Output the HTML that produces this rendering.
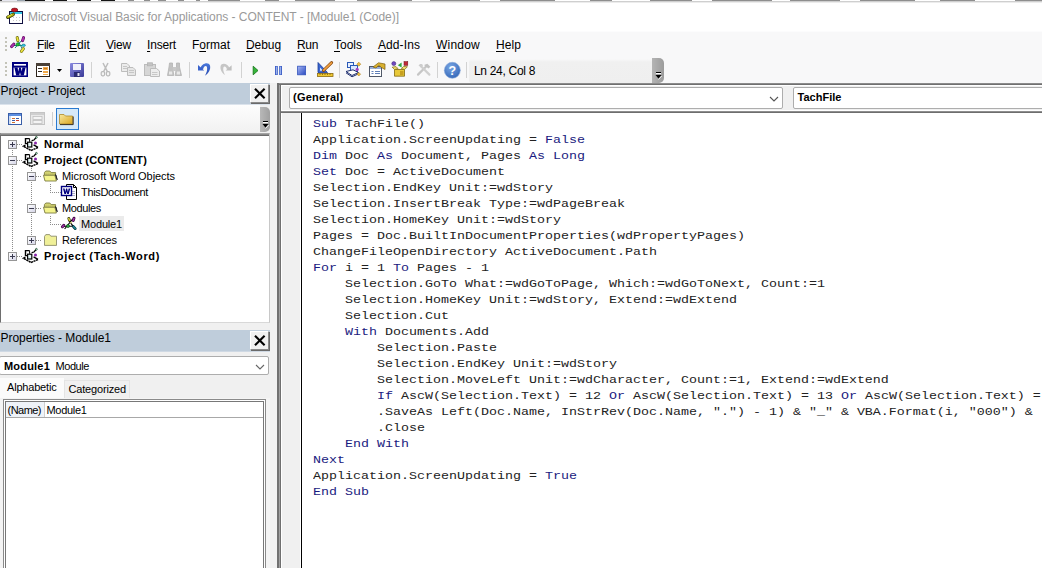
<!DOCTYPE html>
<html><head><meta charset="utf-8"><title>Microsoft Visual Basic for Applications - CONTENT - [Module1 (Code)]</title>
<style>
html,body{margin:0;padding:0;}
body{width:1042px;height:568px;overflow:hidden;position:relative;background:#f0f0f0;font-family:"Liberation Sans",sans-serif;font-size:12px;color:#000;}
.a{position:absolute;}
.t{position:absolute;white-space:nowrap;color:#000;}
u{text-decoration:underline;text-underline-offset:2px;text-decoration-thickness:1px;}
svg{position:absolute;overflow:visible;}
.sep{position:absolute;width:1px;background:#d2d2d2;}
.dot{position:absolute;width:2px;height:2px;background:#c3c3b8;}
#code{position:absolute;left:313px;top:116.9px;margin:0;font-family:"Liberation Mono",monospace;font-size:13.333px;line-height:20px;color:#222;white-space:pre;transform:scaleY(0.8);transform-origin:0 0;}
#code b{font-weight:normal;color:#1a1a80;}
.xb{position:absolute;width:19px;height:19px;box-sizing:border-box;background:#f0f0f0;border:1px solid;border-color:#fff #8a8a8a #8a8a8a #fff;box-shadow:1px 1px 0 #6a6a6a;}
.box{position:absolute;width:9px;height:9px;box-sizing:border-box;border:1px solid #969696;background:linear-gradient(135deg,#fff,#d6d6e8);}
.box i{position:absolute;left:1px;top:3px;width:5px;height:1px;background:#3a3a50;}
.box.p em{position:absolute;left:3px;top:1px;width:1px;height:5px;background:#3a3a50;}
.hd{position:absolute;height:1px;background-image:linear-gradient(90deg,#8c8c8c 50%,transparent 50%);background-size:2px 1px;}
.vd{position:absolute;width:1px;background-image:linear-gradient(180deg,#8c8c8c 50%,transparent 50%);background-size:1px 2px;}
</style></head><body>
<!-- top strip & title bar -->
<div class="a" style="left:0;top:0;width:1042px;height:31px;background:#fff;"></div>
<!-- fragments of the window behind, clipped at the top edge -->
<div class="a" style="left:0;top:0;width:1042px;height:1px;background:linear-gradient(90deg,#444 0 2px,#e8e8f0 2px 17px,#9aa4ae 17px 25px,#151515 25px 45px,#fff 45px 53px,#151515 53px 67px,#fff 67px 77px,#151515 77px 91px,#fff 91px 101px,#151515 101px 115px,#fff 115px 128px,#8e8e8e 128px 134px,#fff 134px 144px,#8e8e8e 144px 150px,#fff 150px 158px,#8e8e8e 158px 166px,#fff 166px 178px,#8e8e8e 178px 184px,#fff 184px 196px,#8e8e8e 196px 200px,#fff 200px 208px,#8e8e8e 208px 240px,#fff 240px 265px,#8e8e8e 265px 279px,#fff 279px 295px,#8e8e8e 295px 335px,#fff 335px 357px,#8e8e8e 357px 412px,#fff 412px 430px,#8e8e8e 430px 480px,#fff 480px 500px,#8e8e8e 500px 555px,#fff 555px 590px,#8e8e8e 590px 612px,#fff 612px 650px,#8e8e8e 650px 692px,#fff 692px 712px,#8e8e8e 712px 772px,#fff 772px 790px,#8e8e8e 790px 840px,#fff 840px 860px,#8e8e8e 860px 915px,#fff 915px 940px,#8e8e8e 940px 975px,#fff 975px 1015px,#8e8e8e 1015px 1042px);"></div>
<div class="a" style="left:0;top:1px;width:1042px;height:1px;background:#cfcfcf;"></div>
<div class="a" style="left:0;top:2px;width:1042px;height:1px;background:#ececec;"></div>

<!-- menu + toolbar background -->
<div class="a" style="left:0;top:31px;width:1042px;height:1px;background:#fcfcfd;"></div>
<div class="a" style="left:0;top:32px;width:1042px;height:51px;background:#f8f8f9;"></div>
<!-- title icon -->
<svg style="left:7px;top:8px;" width="17" height="16" viewBox="0 0 17 16">
<rect x="2.5" y="3.5" width="13" height="12" fill="#fff" stroke="#101040" stroke-width="1"/>
<rect x="3" y="4" width="12" height="2" fill="#38c8e8"/>
<rect x="6" y="9" width="1" height="1" fill="#c8c8c8"/><rect x="9" y="9" width="1" height="1" fill="#c8c8c8"/><rect x="12" y="9" width="1" height="1" fill="#c8c8c8"/><rect x="6" y="12" width="1" height="1" fill="#c8c8c8"/><rect x="9" y="12" width="1" height="1" fill="#c8c8c8"/><rect x="12" y="12" width="1" height="1" fill="#c8c8c8"/>
<ellipse cx="7.6" cy="2" rx="3.2" ry="1.9" fill="#c41424" stroke="#601018" stroke-width="0.6"/>
<path d="M0.8 9.2 L6.2 6.4" stroke="#303000" stroke-width="3.4" stroke-linecap="round"/>
<path d="M0.9 9.1 L6.1 6.4" stroke="#a8a810" stroke-width="2.2" stroke-linecap="round"/>
<path d="M1.2 8.4 L4.6 6.6" stroke="#f0f060" stroke-width="0.9" stroke-linecap="round"/>
</svg>
<!-- menu grip -->
<div class="dot" style="left:5px;top:37px;"></div><div class="dot" style="left:5px;top:41px;"></div><div class="dot" style="left:5px;top:45px;"></div><div class="dot" style="left:5px;top:49px;"></div>
<!-- menu icon (module) -->
<svg style="left:10px;top:36px;" width="17" height="17" viewBox="0 0 17 17">
<path d="M3 9.5 L13.5 9.5 M5 12 L12.5 3.5 M7.5 4 L13 14" stroke="#108080" stroke-width="1" fill="none"/>
<path d="M7.2 1.6 L7.9 4.6" stroke="#606000" stroke-width="3" stroke-linecap="round"/>
<path d="M7.2 1.6 L7.9 4.6" stroke="#e8e040" stroke-width="1.9" stroke-linecap="round"/>
<path d="M13.6 1.6 L12.6 4.6" stroke="#500050" stroke-width="3" stroke-linecap="round"/>
<path d="M13.6 1.6 L12.6 4.6" stroke="#b030b0" stroke-width="1.9" stroke-linecap="round"/>
<path d="M1.6 10.6 L3.8 8.2" stroke="#500050" stroke-width="3" stroke-linecap="round"/>
<path d="M1.6 10.6 L3.8 8.2" stroke="#b030b0" stroke-width="1.9" stroke-linecap="round"/>
<path d="M11.4 15.4 L13.4 12.6" stroke="#606000" stroke-width="3" stroke-linecap="round"/>
<path d="M11.4 15.4 L13.4 12.6" stroke="#e8e040" stroke-width="1.9" stroke-linecap="round"/>
<circle cx="7.7" cy="8.4" r="1.7" fill="#20c030" stroke="#106018" stroke-width="0.5"/>
<ellipse cx="13.6" cy="9.3" rx="1.8" ry="1.2" fill="#30c8e0" stroke="#106070" stroke-width="0.5"/>
</svg>

<!-- status box -->
<div class="a" style="left:469px;top:59px;width:184px;height:24px;background:linear-gradient(180deg,#f8f8f9 0,#f0f0f0 3px,#efefef 100%);border-radius:3px 0 0 3px;"></div>
<div class="a" style="left:652px;top:58px;width:12px;height:25px;background:linear-gradient(90deg,#b4b4b4,#9c9c9c);border-radius:0 5px 5px 0;"></div>
<!-- toolbar grip -->
<div class="dot" style="left:5px;top:62px;"></div><div class="dot" style="left:5px;top:66px;"></div><div class="dot" style="left:5px;top:70px;"></div><div class="dot" style="left:5px;top:74px;"></div>
<!-- word -->
<svg style="left:12px;top:62px;" width="16" height="15" viewBox="0 0 16 15">
<rect x="0" y="0" width="16" height="15" fill="#000080"/>
<rect x="2" y="2" width="12" height="1.6" fill="#fff"/>
<rect x="1.6" y="5.6" width="12.8" height="7.8" fill="#fff"/>
<path d="M2.4 5.6 H5.6 L6.2 9.6 L7.2 5.6 H8.8 L9.8 9.6 L10.4 5.6 H13.6 L11.8 13.4 H8.8 L8 10.2 L7.2 13.4 H4.2 Z" fill="#000080"/>
</svg>
<!-- userform -->
<svg style="left:36px;top:63px;" width="14" height="14" viewBox="0 0 14 14" shape-rendering="crispEdges">
<rect x="0" y="0" width="14" height="14" fill="#2a2018"/>
<rect x="1" y="3" width="12" height="10" fill="#fff"/>
<rect x="0" y="0" width="14" height="3" fill="#4a4038"/>
<rect x="2" y="5" width="4" height="1" fill="#3a3028"/><rect x="2" y="8" width="4" height="1" fill="#3a3028"/>
<rect x="7" y="4" width="5" height="3" fill="#f0a848"/><rect x="8" y="5" width="3" height="1" fill="#c87820"/>
<rect x="7" y="8" width="5" height="2" fill="#f0a848"/><rect x="7" y="11" width="5" height="1" fill="#f0a848"/>
</svg>
<svg style="left:57px;top:69px;" width="5" height="3" viewBox="0 0 5 3"><path d="M0 0 H5 L2.5 3 Z" fill="#000"/></svg>
<!-- save -->
<svg style="left:70px;top:63px;" width="14" height="14" viewBox="0 0 14 14">
<defs><linearGradient id="sv" x1="0" y1="0" x2="1" y2="1"><stop offset="0" stop-color="#8a8ae0"/><stop offset="1" stop-color="#3a3a98"/></linearGradient></defs>
<rect x="0" y="0" width="14" height="14" rx="1" fill="url(#sv)"/>
<rect x="3" y="1" width="8" height="6" fill="#f0f0fa"/>
<rect x="4" y="9" width="6" height="5" fill="#2a2a70"/>
<rect x="7.5" y="10" width="2" height="3" fill="#e0e0f0"/>
</svg>
<div class="sep" style="left:91px;top:62px;height:16px;"></div>
<!-- cut (disabled) -->
<svg style="left:100px;top:62px;" width="11" height="15" viewBox="100 62 11 15">
<path d="M103 63 L107.4 71.6 M108 63 L103.6 71.6" stroke="#bdbdbd" stroke-width="1.5" fill="none"/>
<rect x="101.2" y="71.6" width="3.4" height="4.2" rx="1.2" fill="#f4f4f4" stroke="#b9b9b9" stroke-width="1.2"/><rect x="106.4" y="71.6" width="3.4" height="4.2" rx="1.2" fill="#f4f4f4" stroke="#b9b9b9" stroke-width="1.2"/>
</svg>
<!-- copy (disabled) -->
<svg style="left:121px;top:63px;" width="15" height="13" viewBox="0 0 15 13">
<path d="M0.5 0.5 H6 L8.5 3 V8.5 H0.5 Z" fill="#ececec" stroke="#bdbdbd"/>
<path d="M6.5 4.5 H12 L14.5 7 V12.5 H6.5 Z" fill="#e6e6e6" stroke="#bdbdbd"/>
<path d="M8 7.5 H13 M8 9.5 H13 M2 3.5 H6 M2 5.5 H6" stroke="#c6c6c6" stroke-width="1"/>
</svg>
<!-- paste (disabled) -->
<svg style="left:144px;top:62px;" width="16" height="15" viewBox="0 0 16 15">
<rect x="0.5" y="2.5" width="11" height="11" fill="#d6d6d6" stroke="#bcbcbc"/>
<rect x="3.5" y="0.8" width="5" height="3" fill="#c4c4c4" stroke="#b4b4b4" stroke-width="0.8"/>
<path d="M6.5 6.5 H12.5 L15.5 9 V14.5 H6.5 Z" fill="#ededed" stroke="#bcbcbc"/>
<path d="M8 10.5 H13.5 M8 12.5 H13.5" stroke="#c8c8c8"/>
</svg>
<!-- find (disabled) -->
<svg style="left:167px;top:62px;" width="15" height="14" viewBox="0 0 15 14">
<path d="M2.5 1 H5.5 V5 L6.8 13.5 H0.5 L2 5 Z" fill="#c2c2c2" stroke="#b4b4b4" stroke-width="0.8"/>
<path d="M9.5 1 H12.5 V5 L14.5 13.5 H8.2 L9.5 5 Z" fill="#c2c2c2" stroke="#b4b4b4" stroke-width="0.8"/>
<rect x="5.5" y="5" width="4" height="4" fill="#c8c8c8"/>
<rect x="2" y="9.5" width="3.2" height="3" fill="#e8e8e8"/><rect x="9.8" y="9.5" width="3.2" height="3" fill="#e8e8e8"/>
</svg>
<div class="sep" style="left:189px;top:62px;height:16px;"></div>
<!-- undo -->
<svg style="left:190px;top:58px;" width="52" height="24" viewBox="190 58 52 24">
<defs><linearGradient id="ud" x1="0" y1="0" x2="0" y2="1"><stop offset="0" stop-color="#4a78dc"/><stop offset="1" stop-color="#2648b0"/></linearGradient></defs>
<path d="M200.2 68.6 C201.4 63.4 208.6 61.2 210 65.6 C211 69.6 208.4 73.4 205 75.8 C206.6 72.6 207.6 69.4 207 67.2 C206.4 65 203.8 65.8 203 69.4 Z" fill="url(#ud)"/>
<path d="M198 65 L198 70.5 L204.2 70.5 Z" fill="#3a62cc"/>
<!-- redo (disabled) -->
<path d="M229.6 68.6 C228.4 63.6 221.6 62 220.6 66 C219.8 69.6 222 72.8 225 75 C223.6 72.4 222.8 69.6 223.4 67.6 C224 65.6 226.2 66.2 227 69.4 Z" fill="#c6c6c6"/>
<path d="M231.6 65.2 L231.6 70.5 L225.6 70.5 Z" fill="#c0c0c0"/>
</svg>
<div class="sep" style="left:241px;top:62px;height:16px;"></div>
<!-- run -->
<svg style="left:252px;top:65px;" width="8" height="11" viewBox="252 65 8 11"><path d="M253.2 66.2 L258 70.5 L253.2 74.8 Z" fill="#34b43a" stroke="#187a1c" stroke-width="0.9" stroke-linejoin="round"/></svg>
<!-- pause -->
<svg style="left:274px;top:65px;" width="9" height="11" viewBox="274 65 9 11"><rect x="275" y="66" width="2.8" height="9" fill="#3a5cc4"/><rect x="279.2" y="66" width="2.8" height="9" fill="#3a5cc4"/><rect x="275.9" y="66.6" width="1" height="7.8" fill="#a4baf2"/><rect x="280.1" y="66.6" width="1" height="7.8" fill="#a4baf2"/></svg>
<!-- stop -->
<svg style="left:297px;top:65px;" width="10" height="11" viewBox="297 65 10 11"><defs><linearGradient id="st" x1="0" y1="0" x2="1" y2="1"><stop offset="0" stop-color="#a8b8f4"/><stop offset="1" stop-color="#2848c0"/></linearGradient></defs><rect x="297.6" y="66.2" width="8" height="8.6" fill="url(#st)" stroke="#3454bc" stroke-width="0.8"/></svg>
<!-- design mode -->
<svg style="left:317px;top:61px;" width="17" height="16" viewBox="0 0 17 16">
<path d="M1 1.5 V11.5 H10.5 Z" fill="#3a66d0" stroke="#1c3c98" stroke-width="0.8"/>
<path d="M3 6.5 V9.8 H6.2 Z" fill="#dfe8fa"/>
<path d="M6.5 9.5 L14.6 1.6" stroke="#8a4a10" stroke-width="3" stroke-linecap="round"/>
<path d="M6.8 9.2 L14.4 1.8" stroke="#f0a040" stroke-width="1.7" stroke-linecap="round"/>
<rect x="0.5" y="12.5" width="15.5" height="3" fill="#f0c830" stroke="#8a6a10" stroke-width="0.8"/>
<path d="M3 12.5 V14 M5.5 12.5 V14 M8 12.5 V14 M10.5 12.5 V14 M13 12.5 V14" stroke="#6a5008" stroke-width="0.7"/>
</svg>
<div class="sep" style="left:339px;top:62px;height:16px;"></div>
<!-- project explorer -->
<svg style="left:345px;top:61px;" width="17" height="17" viewBox="0 0 17 17">
<rect x="2.5" y="1.5" width="6" height="5" fill="#e8f0ff" stroke="#2a5ab8"/>
<rect x="5.5" y="4.5" width="7" height="6" fill="#dce8ff" stroke="#2a5ab8"/>
<path d="M1 10.5 L7 14.5 L13.5 11.5 L8 8.8 Z" fill="#fff" stroke="#203070" stroke-width="1"/>
<path d="M1 11.8 L7 15.8 L13.5 12.8" fill="none" stroke="#203070" stroke-width="1"/>
<path d="M13.8 1.2 L15.8 3.2 L13.8 5.2 L11.8 3.2 Z" fill="#f0c040" stroke="#a07010" stroke-width="0.5"/>
<circle cx="12.2" cy="8.4" r="1.6" fill="#a040c0"/>
<path d="M13.8 11.4 L15.6 13.2 L13.8 15 L12 13.2 Z" fill="#f0c040" stroke="#a07010" stroke-width="0.5"/>
</svg>
<!-- properties window -->
<svg style="left:369px;top:62px;" width="17" height="15" viewBox="0 0 17 15">
<rect x="0.5" y="4.5" width="12" height="10" fill="#fff" stroke="#505868"/>
<rect x="1" y="5" width="11" height="2" fill="#9ab0d8"/>
<path d="M2.5 9.5 H4.5 M6 9.5 H11 M2.5 11.5 H4.5 M6 11.5 H11" stroke="#6080b8" stroke-width="1"/>
<path d="M4 5 L9.5 0.8 L16 2 V7.5 L12.5 5.5 L9.8 3.4 L7 6 Z" fill="#d8b030" stroke="#806010" stroke-width="0.7"/>
</svg>
<!-- object browser -->
<svg style="left:391px;top:61px;" width="18" height="16" viewBox="0 0 18 16">
<path d="M3.5 8.5 H13.5 V15.2 H3.5 Z" fill="#e8c838" stroke="#806810" stroke-width="0.8"/>
<path d="M3.5 8.5 L1.2 6.2 L5 5.6 L7 7.6 Z M13.5 8.5 L16.4 5.8 L12.6 5.4 L10.4 7.6 Z" fill="#f4e070" stroke="#806810" stroke-width="0.7"/>
<rect x="9" y="10" width="3.5" height="4" fill="#c8a020"/>
<circle cx="2.8" cy="2.6" r="2" fill="#7048c0" stroke="#382070" stroke-width="0.5"/>
<path d="M6.8 4.2 L10.6 1.6 V6.4 Z" fill="#30a840"/>
<rect x="13" y="0.6" width="3.8" height="3.8" fill="#c02838" stroke="#701018" stroke-width="0.5"/>
</svg>
<!-- toolbox (disabled) -->
<svg style="left:416px;top:63px;" width="16" height="13" viewBox="0 0 16 13">
<path d="M2 11.6 L10.6 3" stroke="#c6c6c6" stroke-width="2.2" stroke-linecap="round"/>
<path d="M13.4 11.6 L5 3.2" stroke="#cfcfcf" stroke-width="2.2" stroke-linecap="round"/>
<path d="M8 2 L11.4 0.8 L14.4 3.8 L12.4 5.6 Z" fill="#c2c2c2"/>
<path d="M2.6 2.6 C3.6 0.6 6.2 0.6 7 2.4 L5 4.4 Z" fill="#cdcdcd"/>
</svg>
<div class="sep" style="left:437px;top:62px;height:16px;"></div>
<!-- help -->
<svg style="left:444px;top:62px;" width="17" height="17" viewBox="0 0 17 17">
<defs><radialGradient id="hp" cx="0.4" cy="0.3" r="0.8"><stop offset="0" stop-color="#7aa6e4"/><stop offset="1" stop-color="#2e62b4"/></radialGradient></defs>
<circle cx="8.3" cy="8.3" r="8" fill="url(#hp)" stroke="#88a8d8" stroke-width="0.6"/>
<text x="8.4" y="12.6" text-anchor="middle" font-family="Liberation Sans, sans-serif" font-size="12.5" font-weight="bold" fill="#fff">?</text>
</svg>
<div class="sep" style="left:466px;top:62px;height:16px;"></div>
<svg style="left:655px;top:72px;" width="7" height="8" viewBox="0 0 7 8"><rect x="1" y="0" width="5" height="1" fill="#000"/><rect x="1" y="1" width="5" height="1" fill="#fff"/><path d="M0.5 3 H6.5 L3.5 6.5 Z" fill="#000"/><path d="M3.5 7.5 L6.8 4" stroke="#fff" stroke-width="0.8"/></svg>

<!-- Project panel -->
<div class="a" style="left:0;top:83px;width:270px;height:21px;background:#bfcddb;"></div>
<div class="a" style="left:0;top:104px;width:270px;height:1px;background:#dbe3ec;"></div>
<div class="xb" style="left:250px;top:84px;"></div>
<svg style="left:254px;top:88px;" width="12" height="11" viewBox="0 0 12 11"><path d="M1 0.8 L10.6 10.2 M10.6 0.8 L1 10.2" stroke="#000" stroke-width="2.1" fill="none"/></svg>
<div class="a" style="left:0;top:105px;width:260px;height:28px;background:linear-gradient(180deg,#fdfdfd,#f1f1f1);"></div>
<div class="a" style="left:260px;top:107px;width:10px;height:25px;background:linear-gradient(90deg,#b8b8b8,#a0a0a0);border-radius:0 5px 5px 0;"></div>
<svg style="left:262px;top:121px;" width="7" height="8" viewBox="0 0 7 8"><rect x="1" y="0" width="5" height="1" fill="#000"/><rect x="1" y="1" width="5" height="1" fill="#fff"/><path d="M0.5 3 H6.5 L3.5 6.5 Z" fill="#000"/><path d="M3.5 7.5 L6.8 4" stroke="#fff" stroke-width="0.8"/></svg>
<!-- project toolbar icons -->
<svg style="left:8px;top:113px;" width="14" height="12" viewBox="0 0 14 12"><rect x="0.5" y="0.5" width="13" height="11" fill="#fff" stroke="#3a5ea8"/><rect x="1" y="1" width="12" height="2" fill="#5d8fe0"/><rect x="1" y="3" width="2" height="8" fill="#cfdcf2"/><rect x="4" y="5" width="3" height="1" fill="#d07030"/><rect x="8" y="5" width="3" height="1" fill="#3a5ea8"/><rect x="4" y="7" width="3" height="1" fill="#3a5ea8"/><rect x="8" y="7" width="3" height="1" fill="#d04030"/><rect x="4" y="9" width="3" height="1" fill="#d07030"/></svg>
<svg style="left:30px;top:112px;" width="15" height="13" viewBox="0 0 15 13"><rect x="0.5" y="0.5" width="14" height="12" fill="#e9e9e9" stroke="#c4c4c4"/><rect x="1" y="1" width="13" height="2" fill="#cfcfcf"/><rect x="3" y="4.5" width="9" height="3" fill="#f4f4f4" stroke="#c0c0c0" stroke-width="0.8"/><rect x="3" y="8.5" width="9" height="3" fill="#f4f4f4" stroke="#c0c0c0" stroke-width="0.8"/></svg>
<div class="sep" style="left:52px;top:112px;height:14px;background:#cfcfcf;"></div>
<div class="a" style="left:56px;top:108px;width:23px;height:22px;box-sizing:border-box;border:1px solid #2a7ad0;background:#d6e9f8;"></div>
<svg style="left:59px;top:113px;" width="16" height="12" viewBox="0 0 16 12"><defs><linearGradient id="fg" x1="0" y1="0" x2="1" y2="1"><stop offset="0" stop-color="#f8e9a0"/><stop offset="1" stop-color="#d9a520"/></linearGradient></defs><path d="M0.5 1.5 H5 L6.5 3 H13.5 V11 H0.5 Z" fill="url(#fg)" stroke="#b08a28" stroke-width="0.8"/><path d="M14.2 3.5 V11.6 H1" stroke="#3a3020" stroke-width="1" fill="none"/></svg>
<!-- tree -->
<div class="a" style="left:0;top:133px;width:270px;height:190px;background:#fff;border:1px solid;border-color:#a4a4a4 #c8c8c8 #d8d8d8 #6e6e6e;box-sizing:border-box;"></div>
<div class="a" style="left:0;top:134px;width:269px;height:1px;background:#8a8a8a;"></div>
<div class="a" style="left:0;top:135px;width:269px;height:1px;background:#6c6c6c;"></div>
<div class="a" style="left:79px;top:216px;width:45px;height:15px;background:#ebebeb;"></div>
<!-- tree lines -->
<div class="vd" style="left:12px;top:150px;height:102px;"></div>
<div class="hd" style="left:17px;top:144px;width:6px;"></div>
<div class="hd" style="left:17px;top:160px;width:6px;"></div>
<div class="hd" style="left:17px;top:256px;width:6px;"></div>
<div class="vd" style="left:31px;top:168px;height:68px;"></div>
<div class="hd" style="left:36px;top:176px;width:6px;"></div>
<div class="hd" style="left:36px;top:208px;width:6px;"></div>
<div class="hd" style="left:36px;top:240px;width:6px;"></div>
<div class="vd" style="left:50px;top:184px;height:8px;"></div>
<div class="hd" style="left:50px;top:192px;width:11px;"></div>
<div class="vd" style="left:50px;top:216px;height:8px;"></div>
<div class="hd" style="left:50px;top:224px;width:11px;"></div>
<div class="box p" style="left:8px;top:140px;"><i></i><em></em></div>
<div class="box" style="left:8px;top:156px;"><i></i></div>
<div class="box p" style="left:8px;top:252px;"><i></i><em></em></div>
<div class="box" style="left:27px;top:172px;"><i></i></div>
<div class="box" style="left:27px;top:204px;"><i></i></div>
<div class="box p" style="left:27px;top:236px;"><i></i><em></em></div>
<svg style="left:23px;top:136px;" width="16" height="16"><path d="M6.6 2.6 H2.5 V7.6 H4.4" fill="none" stroke="#000" stroke-width="1.4"/>
<path d="M6.6 2.6 V5.8" fill="none" stroke="#000" stroke-width="1"/>
<rect x="4.6" y="6.2" width="4.2" height="4.8" fill="#e4f6f6" stroke="#000" stroke-width="1.2"/>
<path d="M2.4 9.2 L0.5 10.2 L8 14.5 L15 11.5" fill="none" stroke="#000" stroke-width="1.5" stroke-dasharray="2.2 0.5"/>
<path d="M10.6 8.8 L15 11.4" stroke="#000" stroke-width="1.4"/>
<path d="M8.6 4.6 L11 4 L13.6 1" stroke="#000" stroke-width="1.2" fill="none"/>
<circle cx="13.4" cy="1.3" r="0.9" fill="#dfe" stroke="#142" stroke-width="0.7"/>
<circle cx="12.5" cy="7" r="1.5" fill="#8828a8"/></svg>
<svg style="left:23px;top:152px;" width="16" height="16"><path d="M6.6 2.6 H2.5 V7.6 H4.4" fill="none" stroke="#000" stroke-width="1.4"/>
<path d="M6.6 2.6 V5.8" fill="none" stroke="#000" stroke-width="1"/>
<rect x="4.6" y="6.2" width="4.2" height="4.8" fill="#e4f6f6" stroke="#000" stroke-width="1.2"/>
<path d="M2.4 9.2 L0.5 10.2 L8 14.5 L15 11.5" fill="none" stroke="#000" stroke-width="1.5" stroke-dasharray="2.2 0.5"/>
<path d="M10.6 8.8 L15 11.4" stroke="#000" stroke-width="1.4"/>
<path d="M8.6 4.6 L11 4 L13.6 1" stroke="#000" stroke-width="1.2" fill="none"/>
<circle cx="13.4" cy="1.3" r="0.9" fill="#dfe" stroke="#142" stroke-width="0.7"/>
<circle cx="12.5" cy="7" r="1.5" fill="#8828a8"/></svg>
<svg style="left:23px;top:248px;" width="16" height="16"><path d="M6.6 2.6 H2.5 V7.6 H4.4" fill="none" stroke="#000" stroke-width="1.4"/>
<path d="M6.6 2.6 V5.8" fill="none" stroke="#000" stroke-width="1"/>
<rect x="4.6" y="6.2" width="4.2" height="4.8" fill="#e4f6f6" stroke="#000" stroke-width="1.2"/>
<path d="M2.4 9.2 L0.5 10.2 L8 14.5 L15 11.5" fill="none" stroke="#000" stroke-width="1.5" stroke-dasharray="2.2 0.5"/>
<path d="M10.6 8.8 L15 11.4" stroke="#000" stroke-width="1.4"/>
<path d="M8.6 4.6 L11 4 L13.6 1" stroke="#000" stroke-width="1.2" fill="none"/>
<circle cx="13.4" cy="1.3" r="0.9" fill="#dfe" stroke="#142" stroke-width="0.7"/>
<circle cx="12.5" cy="7" r="1.5" fill="#8828a8"/></svg>
<svg style="left:43px;top:170px;" width="16" height="13"><path d="M1.4 5.6 L1.4 2.6 L2.8 1 H6.8 L8.2 2.6 H12.6 V5.6 Z" fill="#d8d878" stroke="#7a7a40" stroke-width="0.9"/>
<path d="M2.6 3.2 H11.6 M2.6 4.6 H11.6" stroke="#a8a848" stroke-width="0.7" stroke-dasharray="1 1"/>
<path d="M0.5 5.2 H11.8 L13.4 11 H2 Z" fill="#f4f48c" stroke="#7a7a40" stroke-width="0.9"/>
<path d="M12.4 4.6 L14.2 9.8 L13 5.2 Z" fill="#202020" stroke="#202020" stroke-width="0.9"/></svg>
<svg style="left:43px;top:202px;" width="16" height="13"><path d="M1.4 5.6 L1.4 2.6 L2.8 1 H6.8 L8.2 2.6 H12.6 V5.6 Z" fill="#d8d878" stroke="#7a7a40" stroke-width="0.9"/>
<path d="M2.6 3.2 H11.6 M2.6 4.6 H11.6" stroke="#a8a848" stroke-width="0.7" stroke-dasharray="1 1"/>
<path d="M0.5 5.2 H11.8 L13.4 11 H2 Z" fill="#f4f48c" stroke="#7a7a40" stroke-width="0.9"/>
<path d="M12.4 4.6 L14.2 9.8 L13 5.2 Z" fill="#202020" stroke="#202020" stroke-width="0.9"/></svg>
<svg style="left:44px;top:234px;" width="16" height="13"><path d="M0.5 2.4 L1.8 0.6 H5.6 L6.8 2.2 H12.5 V11.4 H0.5 Z" fill="#f0f098" stroke="#808060" stroke-width="0.8"/></svg>
<!-- ThisDocument icon -->
<svg style="left:61px;top:184px;" width="17" height="16" viewBox="0 0 17 16">
<path d="M5.5 0.5 H12.5 L15.5 3.5 V15.5 H5.5 Z" fill="#fff" stroke="#000" stroke-width="1"/>
<path d="M12.5 0.5 V3.5 H15.5" fill="none" stroke="#000" stroke-width="1"/>
<path d="M11 7.5 H14 M11 9.5 H14 M11 11.5 H14" stroke="#b0b0c8" stroke-width="1"/>
<rect x="0.5" y="2.5" width="10" height="9" fill="#fff" stroke="#000080" stroke-width="1.4"/>
<path d="M2 4.4 H3.6 L4.3 8 L5 4.4 H6.2 L6.9 8 L7.6 4.4 H9.2 L7.8 10 H6.2 L5.6 7.4 L5 10 H3.4 Z" fill="#000080"/>
</svg>
<!-- Module1 icon -->
<svg style="left:61px;top:216px;" width="17" height="16" viewBox="61 216 17 16">
<path d="M63 226.2 L73.5 226.2 M64.6 229 L72.6 219.2 M68.6 219.6 L74.6 228.6" stroke="#000" stroke-width="1.1" fill="none"/>
<path d="M68.8 218.4 L69.4 220.2" stroke="#303000" stroke-width="2.8" stroke-linecap="round"/><path d="M68.8 218.4 L69.4 220.2" stroke="#dcd440" stroke-width="1.5" stroke-linecap="round"/>
<path d="M74 218.2 L73.2 220.4" stroke="#300030" stroke-width="2.9" stroke-linecap="round"/><path d="M74 218.2 L73.2 220.4" stroke="#a030a8" stroke-width="1.6" stroke-linecap="round"/>
<path d="M62.4 226.8 L63.8 225.4" stroke="#300030" stroke-width="2.9" stroke-linecap="round"/><path d="M62.4 226.8 L63.8 225.4" stroke="#a030a8" stroke-width="1.6" stroke-linecap="round"/>
<circle cx="68" cy="226" r="1.6" fill="#28a840" stroke="#0c4018" stroke-width="0.6"/>
<path d="M73.4 226.6 L75.2 228.6" stroke="#003038" stroke-width="2.8" stroke-linecap="round"/><path d="M73.4 226.6 L75.2 228.6" stroke="#208898" stroke-width="1.5" stroke-linecap="round"/>
<circle cx="71" cy="222.6" r="0.9" fill="#e8e080"/>
</svg>

<!-- Properties panel -->
<div class="a" style="left:0;top:330px;width:270px;height:21px;background:#bfcddb;"></div>
<div class="a" style="left:0;top:351px;width:270px;height:1px;background:#cfd9e4;"></div>
<div class="xb" style="left:250px;top:331px;"></div>
<svg style="left:254px;top:335px;" width="12" height="11" viewBox="0 0 12 11"><path d="M1 0.8 L10.6 10.2 M10.6 0.8 L1 10.2" stroke="#000" stroke-width="2.1" fill="none"/></svg>
<div class="a" style="left:-1px;top:356px;width:270px;height:19px;background:#fff;border:1px solid #adadad;box-sizing:border-box;border-radius:2px;"></div>
<svg style="left:255px;top:363.5px;" width="10" height="7" viewBox="0 0 10 7"><path d="M1 1 L5 5 L9 1" fill="none" stroke="#666" stroke-width="1.1"/></svg>
<!-- tabs -->
<div class="a" style="left:0;top:378px;width:64px;height:22px;background:#fbfbfb;"></div>
<div class="a" style="left:64px;top:380px;width:66px;height:18px;background:#f0f0f0;border:1px solid #e4e4e4;border-bottom:none;box-sizing:border-box;"></div>
<div class="a" style="left:0;top:398px;width:270px;height:170px;background:#f4f4f4;"></div>
<!-- grid -->
<div class="a" style="left:3px;top:399px;width:263px;height:180px;background:#fff;border:1px solid #8a8a8a;box-sizing:border-box;"></div>
<div class="a" style="left:5px;top:401px;width:259px;height:180px;background:#fff;border:1px solid #787878;box-sizing:border-box;"></div>
<div class="a" style="left:6px;top:402px;width:38px;height:15px;background:#eef2f8;"></div>
<div class="a" style="left:44px;top:402px;width:1px;height:15px;background:#d0d0d0;"></div>
<div class="a" style="left:6px;top:417px;width:257px;height:1px;background:#a8a8a8;"></div>

<!-- splitter + MDI frame -->
<div class="a" style="left:270px;top:83px;width:772px;height:485px;background:#f0f0f0;"></div>
<div class="a" style="left:277px;top:83px;width:765px;height:1px;background:#8c8c8c;"></div>
<div class="a" style="left:277px;top:84px;width:765px;height:1px;background:#707070;"></div>
<div class="a" style="left:281px;top:85px;width:761px;height:1px;background:#fff;"></div>
<div class="a" style="left:277px;top:83px;width:2px;height:485px;background:#707070;"></div>
<div class="a" style="left:279px;top:85px;width:1px;height:483px;background:#a0a0a0;"></div>
<div class="a" style="left:280px;top:85px;width:1px;height:483px;background:#707070;"></div>
<div class="a" style="left:281px;top:85px;width:1px;height:483px;background:#fff;"></div>
<!-- combos -->
<div class="a" style="left:289px;top:87px;width:494px;height:22px;background:#fff;border:1px solid #adadad;box-sizing:border-box;border-radius:2px;"></div>
<svg style="left:769px;top:95.5px;" width="10" height="7" viewBox="0 0 10 7"><path d="M1 1 L5 5 L9 1" fill="none" stroke="#555" stroke-width="1.1"/></svg>
<div class="a" style="left:793px;top:87px;width:260px;height:22px;background:#fff;border:1px solid #adadad;box-sizing:border-box;border-radius:2px;"></div>
<!-- code pane -->
<div class="a" style="left:281px;top:110px;width:761px;height:1px;background:#fff;"></div>
<div class="a" style="left:281px;top:111px;width:761px;height:1px;background:#8e8e8e;"></div><div class="a" style="left:281px;top:112px;width:761px;height:1px;background:#6e6e6e;"></div>
<div class="a" style="left:281px;top:113px;width:761px;height:455px;background:#fff;"></div>
<div class="a" style="left:282px;top:113px;width:18px;height:455px;background:#f0f0f0;"></div>
<div class="a" style="left:301px;top:113px;width:1px;height:455px;background:#000;"></div>
<pre id="code"><b>Sub</b> TachFile()
Application.ScreenUpdating = <b>False</b>
<b>Dim</b> Doc <b>As</b> Document, Pages <b>As Long</b>
<b>Set</b> Doc = ActiveDocument
Selection.EndKey Unit:=wdStory
Selection.InsertBreak Type:=wdPageBreak
Selection.HomeKey Unit:=wdStory
Pages = Doc.BuiltInDocumentProperties(wdPropertyPages)
ChangeFileOpenDirectory ActiveDocument.Path
<b>For</b> i = 1 <b>To</b> Pages - 1
    Selection.GoTo What:=wdGoToPage, Which:=wdGoToNext, Count:=1
    Selection.HomeKey Unit:=wdStory, Extend:=wdExtend
    Selection.Cut
    <b>With</b> Documents.Add
        Selection.Paste
        Selection.EndKey Unit:=wdStory
        Selection.MoveLeft Unit:=wdCharacter, Count:=1, Extend:=wdExtend
        <b>If</b> AscW(Selection.Text) = 12 <b>Or</b> AscW(Selection.Text) = 13 <b>Or</b> AscW(Selection.Text) =
        .SaveAs Left(Doc.Name, InStrRev(Doc.Name, ".") - 1) &amp; "_" &amp; VBA.Format(i, "000") &amp;
        .Close
    <b>End With</b>
<b>Next</b>
Application.ScreenUpdating = <b>True</b>
<b>End Sub</b></pre>

<div class="t" style="left:28px;top:9.0px;font-size:12px;line-height:16px;color:#9a9a9a;letter-spacing:-0.040px;">Microsoft Visual Basic for Applications - CONTENT - [Module1 (Code)]</div>
<div class="t" style="left:37px;top:37.0px;font-size:12px;line-height:16px;letter-spacing:-0.465px;"><u>F</u>ile</div>
<div class="t" style="left:69px;top:37.0px;font-size:12px;line-height:16px;letter-spacing:0.074px;"><u>E</u>dit</div>
<div class="t" style="left:106px;top:37.0px;font-size:12px;line-height:16px;letter-spacing:-0.203px;"><u>V</u>iew</div>
<div class="t" style="left:147px;top:37.0px;font-size:12px;line-height:16px;letter-spacing:-0.172px;"><u>I</u>nsert</div>
<div class="t" style="left:192px;top:37.0px;font-size:12px;line-height:16px;letter-spacing:-0.005px;">F<u>o</u>rmat</div>
<div class="t" style="left:246px;top:37.0px;font-size:12px;line-height:16px;letter-spacing:-0.075px;"><u>D</u>ebug</div>
<div class="t" style="left:297px;top:37.0px;font-size:12px;line-height:16px;letter-spacing:-0.344px;"><u>R</u>un</div>
<div class="t" style="left:334px;top:37.0px;font-size:12px;line-height:16px;letter-spacing:-0.003px;"><u>T</u>ools</div>
<div class="t" style="left:378px;top:37.0px;font-size:12px;line-height:16px;letter-spacing:0.089px;"><u>A</u>dd-Ins</div>
<div class="t" style="left:436px;top:37.0px;font-size:12px;line-height:16px;letter-spacing:0.219px;"><u>W</u>indow</div>
<div class="t" style="left:496px;top:37.0px;font-size:12px;line-height:16px;letter-spacing:0.078px;"><u>H</u>elp</div>
<div class="t" style="left:474px;top:62.5px;font-size:12px;line-height:16px;letter-spacing:-0.310px;">Ln 24, Col 8</div>
<div class="t" style="left:0.5px;top:83.0px;font-size:12px;line-height:16px;letter-spacing:-0.051px;">Project - Project</div>
<div class="t" style="left:0.5px;top:330.0px;font-size:12px;line-height:16px;letter-spacing:-0.045px;">Properties - Module1</div>
<div class="t" style="left:293px;top:89.0px;font-size:11px;line-height:16px;font-weight:bold;letter-spacing:0.245px;">(General)</div>
<div class="t" style="left:797.5px;top:89.0px;font-size:11px;line-height:16px;font-weight:bold;letter-spacing:0.023px;">TachFile</div>
<div class="t" style="left:44px;top:136.0px;font-size:11px;line-height:16px;font-weight:bold;letter-spacing:0.349px;">Normal</div>
<div class="t" style="left:44px;top:152.0px;font-size:11px;line-height:16px;font-weight:bold;letter-spacing:0.127px;">Project (CONTENT)</div>
<div class="t" style="left:62px;top:168.0px;font-size:11px;line-height:16px;letter-spacing:-0.050px;">Microsoft Word Objects</div>
<div class="t" style="left:81px;top:184.0px;font-size:11px;line-height:16px;letter-spacing:-0.327px;">ThisDocument</div>
<div class="t" style="left:62px;top:200.0px;font-size:11px;line-height:16px;letter-spacing:-0.368px;">Modules</div>
<div class="t" style="left:81px;top:216.0px;font-size:11px;line-height:16px;letter-spacing:-0.172px;">Module1</div>
<div class="t" style="left:62px;top:232.0px;font-size:11px;line-height:16px;letter-spacing:-0.127px;">References</div>
<div class="t" style="left:44px;top:248.0px;font-size:11px;line-height:16px;font-weight:bold;letter-spacing:0.626px;">Project (Tach-Word)</div>
<div class="t" style="left:4px;top:358.0px;font-size:11px;line-height:16px;font-weight:bold;letter-spacing:0.196px;">Module1</div>
<div class="t" style="left:55.5px;top:358.0px;font-size:11px;line-height:16px;letter-spacing:-0.430px;">Module</div>
<div class="t" style="left:7px;top:379.0px;font-size:11px;line-height:16px;letter-spacing:-0.188px;">Alphabetic</div>
<div class="t" style="left:68.5px;top:381.0px;font-size:11px;line-height:16px;letter-spacing:-0.166px;">Categorized</div>
<div class="t" style="left:7.5px;top:402.0px;font-size:11px;line-height:16px;letter-spacing:-0.529px;">(Name)</div>
<div class="t" style="left:46.5px;top:402.0px;font-size:11px;line-height:16px;letter-spacing:-0.315px;">Module1</div>
</body></html>
